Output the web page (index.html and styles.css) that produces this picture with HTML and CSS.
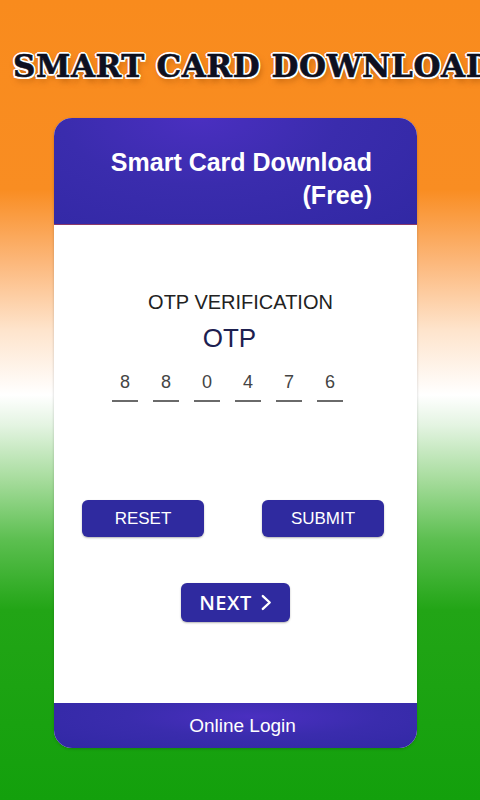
FILE: index.html
```html
<!DOCTYPE html>
<html lang="en">
<head>
<meta charset="utf-8">
<title>Smart Card Download</title>
<link rel="stylesheet" href="styles.css">
</head>
<body>
<div class="page">
  <h1 class="banner">SMART CARD DOWNLOAD</h1>
  <div class="card">
    <div class="card-head">
      <div class="head-title">Smart Card Download</div>
      <div class="head-title">(Free)</div>
    </div>
    <div class="card-body">
      <div class="verify">OTP VERIFICATION</div>
      <div class="otp-label">OTP</div>
      <div class="digits">
        <span class="digit">8</span>
        <span class="digit">8</span>
        <span class="digit">0</span>
        <span class="digit">4</span>
        <span class="digit">7</span>
        <span class="digit">6</span>
      </div>
      <div class="actions">
        <button class="btn">RESET</button>
        <button class="btn">SUBMIT</button>
      </div>
      <button class="btn next">NEXT
        <svg class="chev" viewBox="0 0 12 18" width="11" height="17"><path d="M2 2 L9.5 9 L2 16" fill="none" stroke="#fff" stroke-width="2.6" stroke-linecap="round" stroke-linejoin="round"/></svg>
      </button>
    </div>
    <div class="card-foot">Online Login</div>
  </div>
</div>
</body>
</html>
```

FILE: styles.css
```css
html, body {
  margin: 0;
  padding: 0;
}
body {
  width: 480px;
  height: 800px;
  overflow: hidden;
  font-family: "Liberation Sans", Arial, sans-serif;
}
.page {
  width: 480px;
  height: 800px;
  overflow: hidden;
  background: linear-gradient(to bottom,
    #f98b1d 0px,
    #f98d22 190px,
    #fcb678 260px,
    #fee4cc 330px,
    #ffffff 395px,
    #e4f4e2 425px,
    #a6dc9c 480px,
    #5cbf50 540px,
    #22a516 610px,
    #13a00c 800px);
  display: flex;
  flex-direction: column;
}
.banner {
  margin: 46px 0 0 13px;
  white-space: nowrap;
  font-family: "DejaVu Serif", "Liberation Serif", serif;
  font-weight: bold;
  font-size: 31px;
  line-height: 40px;
  letter-spacing: 0.6px;
  color: #0e1020;
  -webkit-text-stroke: 0.6px #0e1020;
  text-shadow:
    1.5px 1.5px 0 #fff, -1.5px -1.5px 0 #fff, 1.5px -1.5px 0 #fff, -1.5px 1.5px 0 #fff,
    0 2px 0 #fff, 2px 0 0 #fff, 0 -2px 0 #fff, -2px 0 0 #fff,
    2px 4px 6px rgba(150, 70, 0, 0.6);
}
.card {
  margin: 32px 0 0 54px;
  width: 363px;
  height: 630px;
  border-radius: 18px;
  overflow: hidden;
  display: flex;
  flex-direction: column;
  background: #fff;
  box-shadow: 0 1px 3px rgba(0,0,0,0.2);
}
.card-head {
  height: 107px;
  box-sizing: border-box;
  padding: 28px 45px 0 0;
  background: radial-gradient(ellipse at 40% 0%, #4a2fc0 0%, #3a2cad 45%, #3128a4 100%);
  color: #fff;
  text-align: right;
  border-bottom: 1px solid #8a3a6a;
}
.head-title {
  font-weight: bold;
  font-size: 25px;
  line-height: 33px;
}
.card-body {
  flex: 1;
  display: flex;
  flex-direction: column;
  align-items: center;
  padding-top: 65px;
}
.verify {
  font-size: 20px;
  line-height: 24px;
  color: #222;
  margin-left: 10px;
}
.otp-label {
  font-size: 26px;
  line-height: 30px;
  color: #1d2050;
  margin-top: 9px;
  margin-left: -12px;
}
.digits {
  display: flex;
  gap: 15px;
  margin-top: 17px;
  margin-left: -16px;
}
.digit {
  width: 26px;
  text-align: center;
  font-size: 18px;
  line-height: 24px;
  color: #444;
  padding-bottom: 6px;
  border-bottom: 2px solid #6a6a6a;
}
.actions {
  align-self: stretch;
  display: flex;
  justify-content: space-between;
  padding: 0 33px 0 28px;
  margin-top: 98px;
}
.btn {
  width: 122px;
  height: 37px;
  border: none;
  border-radius: 6px;
  background: #2f2a9f;
  color: #fff;
  font-family: "Liberation Sans", Arial, sans-serif;
  font-size: 17px;
  padding: 0;
  box-shadow: 0 1px 2px rgba(0,0,0,0.3);
}
.next {
  width: 109px;
  height: 39px;
  margin-top: 46px;
  font-family: "Open Sans", "Liberation Sans", sans-serif;
  font-weight: 600;
  font-size: 20px;
  letter-spacing: 0.5px;
  display: flex;
  align-items: center;
  justify-content: center;
  gap: 9px;
}
.chev {
  display: block;
}
.card-foot {
  height: 45px;
  background: radial-gradient(ellipse at 55% 30%, #4a2fc0 0%, #3a2cad 45%, #3128a4 100%);
  color: #fff;
  font-size: 19px;
  line-height: 45px;
  text-align: center;
  padding-left: 14px;
}
```
